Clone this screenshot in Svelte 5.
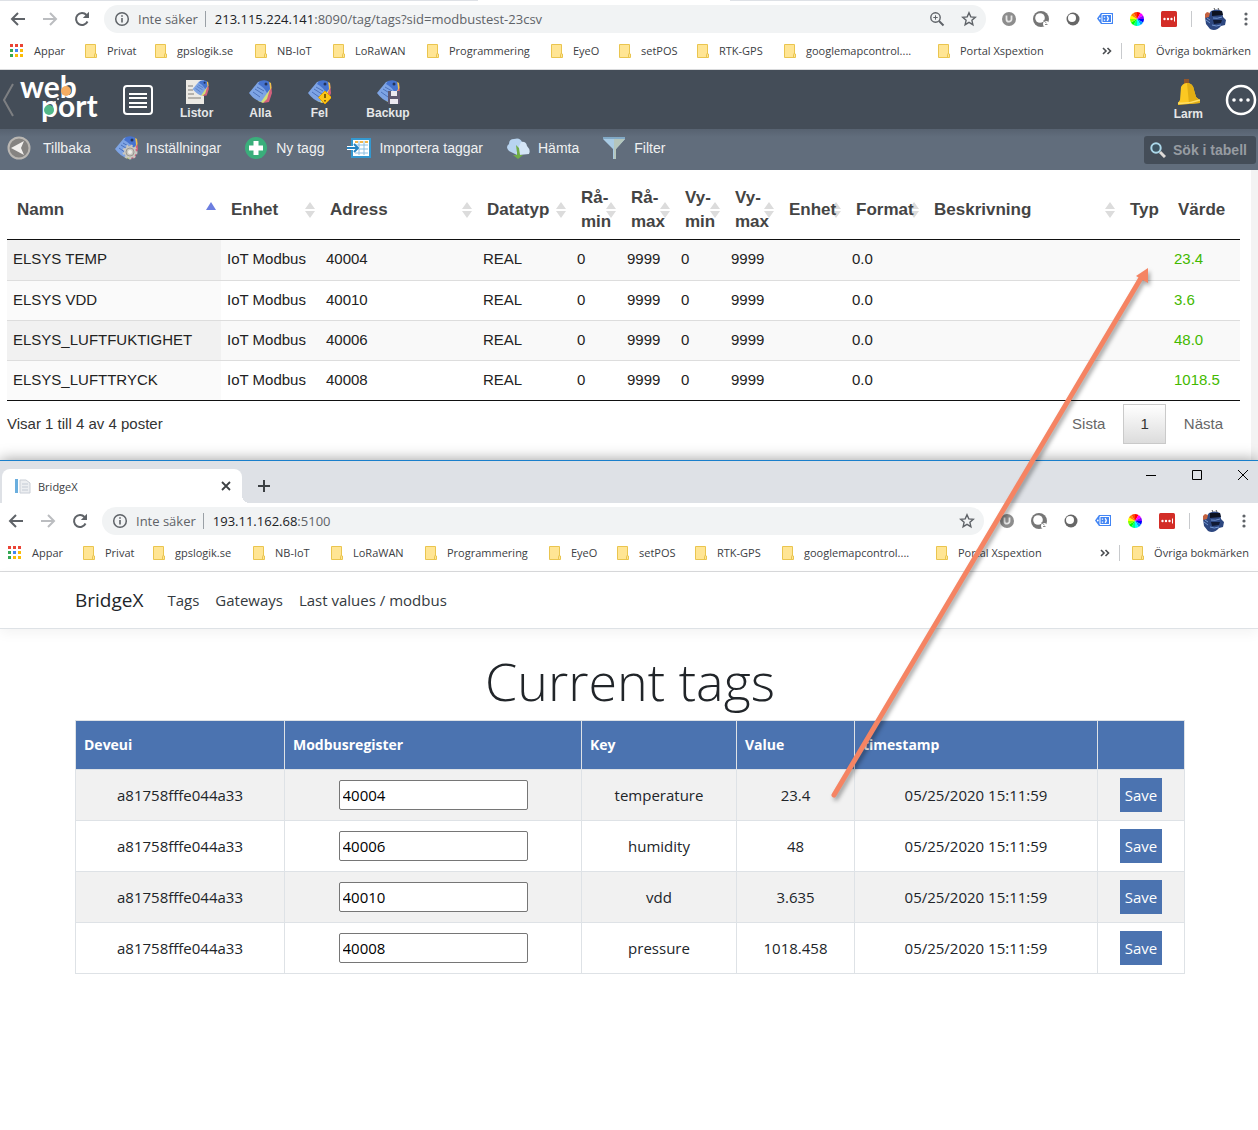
<script>
  const bookmarks = [
    'Privat',
    'gpslogik.se',
    'NB-IoT',
    'LoRaWAN',
    'Programmering',
    'EyeO',
    'setPOS',
    'RTK-GPS',
    'googlemapcontrol....',
    'Portal Xspextion',
  ];

  const appColors = ['#ea4335', '#ea4335', '#ea4335', '#34a853', '#4285f4', '#fbbc05', '#34a853', '#fbbc05', '#fbbc05'];
  const wheelColors = ['#f00', '#f0f', '#80f', '#00f', '#09f', '#0ff', '#0f8', '#0f0', '#8f0', '#ff0', '#f80', '#f40'];

  const columns = [
    { label: 'Namn', width: 'w-name', sort: 'asc' },
    { label: 'Enhet', width: 'w-unit', sort: 'both' },
    { label: 'Adress', width: 'w-address', sort: 'both' },
    { label: 'Datatyp', width: 'w-type', sort: 'both' },
    { label: 'Rå-min', width: 'w-min', sort: 'both' },
    { label: 'Rå-max', width: 'w-max', sort: 'both' },
    { label: 'Vy-min', width: 'w-min', sort: 'both' },
    { label: 'Vy-max', width: 'w-max', sort: 'both' },
    { label: 'Enhet', width: 'w-suffix', sort: 'both' },
    { label: 'Format', width: 'w-format', sort: 'both' },
    { label: 'Beskrivning', width: 'w-auto', sort: 'both' },
    { label: 'Typ', width: 'w-kind', sort: '' },
    { label: 'Värde', width: 'w-value', sort: '' },
  ];

  const posts = [
    { name: 'ELSYS TEMP', address: '40004', value: '23.4' },
    { name: 'ELSYS VDD', address: '40010', value: '3.6' },
    { name: 'ELSYS_LUFTFUKTIGHET', address: '40006', value: '48.0' },
    { name: 'ELSYS_LUFTTRYCK', address: '40008', value: '1018.5' },
  ];

  let tags = $state([
    { deveui: 'a81758fffe044a33', register: '40004', key: 'temperature', value: '23.4', time: '05/25/2020 15:11:59' },
    { deveui: 'a81758fffe044a33', register: '40006', key: 'humidity', value: '48', time: '05/25/2020 15:11:59' },
    { deveui: 'a81758fffe044a33', register: '40010', key: 'vdd', value: '3.635', time: '05/25/2020 15:11:59' },
    { deveui: 'a81758fffe044a33', register: '40008', key: 'pressure', value: '1018.458', time: '05/25/2020 15:11:59' },
  ]);

  function slice(i) {
    const a = (i * Math.PI) / 6;
    const b = ((i + 1) * Math.PI) / 6;
    return `M8 8 L${8 + 7 * Math.sin(a)} ${8 - 7 * Math.cos(a)} A7 7 0 0 1 ${8 + 7 * Math.sin(b)} ${8 - 7 * Math.cos(b)} Z`;
  }
</script>

{#snippet folder()}
  <svg class="folder" viewBox="0 0 12 14" aria-hidden="true">
    <path d="M.5 .5h10v9.500h1v3.500H.5z" fill="#ffe594" stroke="#eac54f" />
    <path d="M9.500 13V10.500q0-1 1-1" fill="none" stroke="#eac54f" />
  </svg>
{/snippet}

{#snippet tagShapes()}
  <path d="M20 3l3 1 1 9-3 9-6 1z" fill="#d4617c" />
  <path d="M20 7l2 2-3 10-4 4-5-2z" fill="#d3e07a" />
  <path d="M21 2l2 1 .5 5-2 3z" fill="#f0c24b" />
  <path d="M10 2q6-2 11 0l1 7-9 13q-7-2-12-9z" fill="#7ea4e4" />
  <path d="M12 1q6-2 9 1l1 7-3 4q-3-6-9-9z" fill="#4673cf" />
  <circle cx="18" cy="4" r="1.500" fill="#26355c" />
  <path d="M5 12l7 5M7 9l8 5M9 7l7 4" stroke="#4d72bb" stroke-width="1" />
{/snippet}

{#snippet addressBar(host, rest, zoomed)}
  <div class="address-bar">
    <button class="tool" aria-label="Bakåt">
      <svg viewBox="0 0 16 16"><path d="M15 8H2M8 2L2 8l6 6" fill="none" stroke="#5f6368" stroke-width="2" /></svg>
    </button>
    <button class="tool" aria-label="Framåt">
      <svg viewBox="0 0 16 16"><path d="M1 8h13M8 2l6 6-6 6" fill="none" stroke="#bbbdc0" stroke-width="2" /></svg>
    </button>
    <button class="tool" aria-label="Ladda om">
      <svg viewBox="0 0 16 16">
        <path d="M13.500 10.500A6 6 0 1 1 12.500 4" fill="none" stroke="#5f6368" stroke-width="2" />
        <path d="M15 .8V7H8.800z" fill="#5f6368" />
      </svg>
    </button>
    <div class="omnibox">
      <svg class="info" viewBox="0 0 16 16" aria-hidden="true">
        <circle cx="8" cy="8" r="6.300" fill="none" stroke="#5f6368" stroke-width="1.500" />
        <path d="M8 7v4.500M8 4.200v1.600" stroke="#5f6368" stroke-width="1.600" />
      </svg>
      <span class="insecure">Inte säker</span>
      <span class="url"><b>{host}</b>{rest}</span>
      {#if zoomed}
        <svg class="ico" viewBox="0 0 16 16" aria-hidden="true">
          <circle cx="6.500" cy="6.500" r="4.700" fill="none" stroke="#5f6368" stroke-width="1.400" />
          <path d="M10 10l4.500 4.500" stroke="#5f6368" stroke-width="2" />
          <path d="M4.300 6.500h4.400M6.500 4.300v4.400" stroke="#5f6368" />
        </svg>
      {/if}
      <svg class="ico" viewBox="0 0 16 16" aria-hidden="true">
        <path d="M8 1.800l1.800 4.100 4.500.4-3.400 3 1 4.400L8 11.400l-3.900 2.300 1-4.400-3.400-3 4.500-.4z" fill="none" stroke="#5f6368" stroke-width="1.400" />
      </svg>
    </div>
    <div class="extensions">
      <svg class="ico" viewBox="0 0 16 16" aria-hidden="true">
        <circle cx="8" cy="8" r="7" fill="#8d8d8d" />
        <path d="M5.500 4.500v3.700a2.500 2.500 0 0 0 5 0V4.500" fill="none" stroke="#e6e6e6" stroke-width="1.800" />
      </svg>
      <svg class="ico" viewBox="0 0 16 16" aria-hidden="true">
        <circle cx="8" cy="8" r="8" fill="#767676" />
        <circle cx="7" cy="7" r="4.800" fill="#fff" />
        <circle cx="13" cy="13" r="3" fill="#fff" />
        <path d="M10.500 9.500l3 2.500M12 13.500h2.500" stroke="#8a8a8a" fill="none" />
      </svg>
      <svg class="ico" viewBox="0 0 16 16" aria-hidden="true">
        <circle cx="8" cy="8" r="6.500" fill="#666" />
        <circle cx="7" cy="7" r="4" fill="#fff" />
      </svg>
      <svg class="ico" viewBox="0 0 16 16" aria-hidden="true">
        <path d="M4 2h12v11H4L0 7.500z" fill="#4285f4" />
        <path d="M5 3.500h9.500v8H5z" fill="none" stroke="#fff" />
        <path d="M7.500 5.500v1.200M7.500 8.500v1.200M10 5.200q2.500 2.300 0 4.600" fill="none" stroke="#fff" stroke-width="1.400" />
        <circle cx="2.800" cy="7.500" r=".9" fill="#fff" />
      </svg>
      <svg class="ico" viewBox="0 0 16 16" aria-hidden="true">
        {#each wheelColors as color, i}
          <path d={slice(i)} fill={color} />
        {/each}
      </svg>
      <svg class="ico" viewBox="0 0 16 16" aria-hidden="true">
        <rect width="16" height="16" rx="1.500" fill="#d32d27" />
        <path d="M13.500 5.500v5" stroke="#fff" />
        <circle cx="3.500" cy="8" r="1.200" fill="#fff" />
        <circle cx="7" cy="8" r="1.200" fill="#fff" />
        <circle cx="10.500" cy="8" r="1.200" fill="#fff" />
      </svg>
      <span class="rule"></span>
      <svg class="avatar" viewBox="0 0 22 22" aria-hidden="true">
        <path d="M7 3q6-3 11 0l1 6 3 3-1 5-4 1q-5 6-11 3l-4-5L1 9l4-3z" fill="#2d4780" />
        <path d="M1 6l2-2 3 1-1 4-4 1z" fill="#c5623f" />
        <path d="M8 3h10l1 4-11 1z" fill="#0d1220" />
        <path d="M9 12h9l-1 3-7 1z" fill="#111a33" />
        <path d="M9 10q4 1 9-1M8 17q4 2 9 0M2 12l4 3M3 10l3 2" stroke="#7396d0" fill="none" />
        <path d="M10 0l1 2M14 0l1 2" stroke="#555" />
      </svg>
      <button class="tool" aria-label="Meny">
        <svg viewBox="0 0 16 16" fill="#5f6368">
          <circle cx="8" cy="3" r="1.600" /><circle cx="8" cy="8" r="1.600" /><circle cx="8" cy="13" r="1.600" />
        </svg>
      </button>
    </div>
  </div>
{/snippet}

{#snippet bookmarkBar()}
  <nav class="bookmarks" aria-label="Bokmärken">
    <a class="bookmark apps" href="#appar">
      <svg class="grid-icon" viewBox="0 0 14 14" aria-hidden="true">
        {#each appColors as color, i}
          <rect x={(i % 3) * 5} y={Math.floor(i / 3) * 5} width="3" height="3" fill={color} />
        {/each}
      </svg>
      Appar
    </a>
    {#each bookmarks as name}
      <a class="bookmark" href="#{name}">{@render folder()}{name}</a>
    {/each}
    <div class="overflow">
      <button class="more" aria-label="Fler bokmärken">
        <svg viewBox="0 0 10 8"><path d="M1 1l3 3-3 3M5.500 1l3 3-3 3" fill="none" stroke="#4a4d51" stroke-width="1.600" /></svg>
      </button>
      <span class="rule"></span>
      <a class="bookmark" href="#ovriga">{@render folder()}Övriga bokmärken</a>
    </div>
  </nav>
{/snippet}

<div class="desktop">
  <section class="window webport">
    <div class="tab-edge"></div>
    {@render addressBar('213.115.224.141', ':8090/tag/tags?sid=modbustest-23csv', true)}
    {@render bookmarkBar()}

    <header class="app-header">
      <svg class="collapse" viewBox="0 0 12 36" aria-hidden="true">
        <path d="M11 2L2 18l9 16" fill="none" stroke="#7d7f82" stroke-width="2" />
      </svg>
      <svg class="logo" viewBox="0 0 84 50" role="img" aria-label="web port">
        <text><tspan x="1" y="23">web</tspan><tspan x="22" y="42">port</tspan></text>
        <circle cx="47" cy="16" r="5" fill="#f6ad62" />
        <circle cx="30" cy="35" r="5" fill="#52b788" />
        <circle cx="36" cy="27" r="1" fill="#fff" />
        <circle cx="39" cy="24" r="1" fill="#fff" />
      </svg>
      <button class="menu" aria-label="Meny">
        <svg viewBox="0 0 30 30" fill="none" stroke="#fff">
          <rect x="1" y="1" width="28" height="28" rx="3" stroke-width="2" />
          <path d="M6 9h18M6 13h18M6 18h18M6 22h18" stroke-width="2" />
        </svg>
      </button>
      <nav class="views">
        <a href="#listor">
          <svg viewBox="0 0 24 24" aria-hidden="true">
            <path d="M1 0h18v24H1z" fill="#ece9e4" />
            <path d="M3 6h5M3 10h5M3 14h6M3 18h13" stroke="#a3a09b" stroke-width="1.500" />
            <g transform="translate(7 0) scale(.7)">{@render tagShapes()}</g>
          </svg>
          Listor
        </a>
        <a href="#alla">
          <svg viewBox="0 0 24 24" aria-hidden="true">{@render tagShapes()}</svg>
          Alla
        </a>
        <a href="#fel">
          <svg viewBox="0 0 24 24" aria-hidden="true">
            {@render tagShapes()}
            <path d="M18 11l6.500 6.500L18 24l-6.500-6.500z" fill="#fcc419" stroke="#e2a400" />
            <path d="M18 14v4M18 20v1.500" stroke="#5c4300" stroke-width="1.500" />
          </svg>
          Fel
        </a>
        <a href="#backup">
          <svg viewBox="0 0 24 24" aria-hidden="true">
            {@render tagShapes()}
            <path d="M12 11h12v13H12z" fill="#5e5870" />
            <path d="M15 11h6v5h-6zM14 19h8v5h-8z" fill="#ece9f0" />
          </svg>
          Backup
        </a>
      </nav>
      <a class="alarm" href="#larm">
        <svg viewBox="0 0 24 28" aria-hidden="true">
          <path d="M8 0h5v5H8z" fill="#935629" />
          <path d="M5 8q2-4 6-4 6 0 7 7l2 7 5 4-1 2-22 2 0-2 2-3z" fill="#fcc822" />
          <path d="M11 4q6 0 7 7l2 7 5 4-1 2-11 1z" fill="#e2ae14" />
          <path d="M2 24q11 1 22-3" fill="none" stroke="#ffdf66" stroke-width="1.500" />
        </svg>
        Larm
      </a>
      <button class="options" aria-label="Fler val">
        <svg viewBox="0 0 32 32">
          <circle cx="16" cy="16" r="14" fill="none" stroke="#fff" stroke-width="2.500" />
          <circle cx="9" cy="16" r="1.800" fill="#fff" /><circle cx="16" cy="16" r="1.800" fill="#fff" /><circle cx="23" cy="16" r="1.800" fill="#fff" />
        </svg>
      </button>
    </header>

    <div class="app-toolbar">
      <button class="back">
        <svg viewBox="0 0 24 24" aria-hidden="true">
          <circle cx="12" cy="12" r="10.500" fill="#858381" stroke="#bab7b3" stroke-width="2" />
          <path d="M4 12l13-7-3 7 3 7z" fill="#f1efed" />
        </svg>
        Tillbaka
      </button>
      <button>
        <svg viewBox="0 0 24 24" aria-hidden="true">
          {@render tagShapes()}
          <circle cx="16" cy="16" r="6" fill="#c9c7c1" stroke="#c9c7c1" stroke-width="3" stroke-dasharray="2 2" />
          <circle cx="16" cy="16" r="4" fill="none" stroke="#9b9992" />
          <circle cx="16" cy="16" r="2" fill="#eeece6" />
        </svg>
        Inställningar
      </button>
      <button>
        <svg viewBox="0 0 24 24" aria-hidden="true">
          <circle cx="12" cy="12" r="11" fill="#3aae7b" />
          <path d="M12 5v14M5 12h14" stroke="#fff" stroke-width="5" />
        </svg>
        Ny tagg
      </button>
      <button>
        <svg viewBox="0 0 24 24" aria-hidden="true">
          <path d="M5 3h18v18H5z" fill="#fff" stroke="#3498cf" stroke-width="2" />
          <path d="M8 9h13M8 13h13M8 17h13M12 5v14M17 5v14" stroke="#8cbfe2" />
          <path d="M8 5h3v2H8zM13 5h3v2h-3zM18 5h3v2h-3z" fill="#f3b64b" />
          <path d="M0 10h6V6l7 6-7 6v-4H0z" fill="#fff" />
          <path d="M0 12h10M7 8l4 4-4 4" fill="none" stroke="#2483c2" stroke-width="2" />
        </svg>
        Importera taggar
      </button>
      <button>
        <svg viewBox="0 0 24 24" aria-hidden="true">
          <path d="M3 15q-4-4 0-7 0-5 5-5 6-2 8 3l1 7-6 6z" fill="#b8d4f0" />
          <path d="M10 17l5-11q5-1 6 4 4 4 2 8l-10 1z" fill="#d4e5f6" />
          <path d="M10 9l1 8v2H7l5 4 5-4h-3l-1-7z" fill="#70ad47" />
        </svg>
        Hämta
      </button>
      <button>
        <svg viewBox="0 0 24 24" aria-hidden="true">
          <path d="M1 1h22v2l-9 10v10h-3V13L1 3z" fill="#a9cbe4" />
          <path d="M12 3h11l-9 10v10h-2z" fill="#b5c6bc" />
          <path d="M1 1h22v2H1z" fill="#81a9c6" />
        </svg>
        Filter
      </button>
      <label class="search">
        <svg viewBox="0 0 16 16" aria-hidden="true">
          <circle cx="6" cy="6" r="4.700" fill="#3d5462" stroke="#acd8ea" stroke-width="2" />
          <path d="M10 10l5 5" stroke="#dedad7" stroke-width="3" />
        </svg>
        <input type="text" placeholder="Sök i tabell" aria-label="Sök i tabell" />
      </label>
    </div>

    <div class="list">
      <div class="list-body">
        <table class="posts">
          <thead>
            <tr>
              {#each columns as col}
                <th class={col.width} scope="col">
                  {col.label}
                  {#if col.sort === 'asc'}
                    <svg class="sorter" viewBox="0 0 10 16" aria-hidden="true"><path d="M5 0l5 8H0z" fill="#6c7ee0" /></svg>
                  {:else if col.sort}
                    <svg class="sorter" viewBox="0 0 10 16" aria-hidden="true"><path d="M5 0l5 7H0zM5 16l5-7H0z" fill="#dcdcdc" /></svg>
                  {/if}
                </th>
              {/each}
            </tr>
          </thead>
          <tbody>
            {#each posts as post}
              <tr>
                <td>{post.name}</td>
                <td>IoT Modbus</td>
                <td>{post.address}</td>
                <td>REAL</td>
                <td>0</td>
                <td>9999</td>
                <td>0</td>
                <td>9999</td>
                <td></td>
                <td>0.0</td>
                <td></td>
                <td></td>
                <td class="live">{post.value}</td>
              </tr>
            {/each}
          </tbody>
        </table>
        <div class="list-footer">
          <span>Visar 1 till 4 av 4 poster</span>
          <div class="pager">
            <button>Sista</button>
            <button class="current">1</button>
            <button>Nästa</button>
          </div>
        </div>
      </div>
      <div class="scrollbar"></div>
    </div>
  </section>

  <section class="window bridgex">
    <div class="tab-strip">
      <div class="tab">
        <svg viewBox="0 0 16 16" aria-hidden="true">
          <path d="M0 1h3v14H0z" fill="#6aaede" />
          <path d="M5 2h6l4 3v10H5z" fill="#eceef1" stroke="#c9ced6" />
          <path d="M7 6h6M7 9h6M7 12h6" stroke="#c3cad4" />
        </svg>
        <span>BridgeX</span>
        <button aria-label="Stäng flik">
          <svg viewBox="0 0 10 10"><path d="M1 1l8 8M9 1L1 9" stroke="#3c4043" stroke-width="1.800" /></svg>
        </button>
      </div>
      <button class="new-tab" aria-label="Ny flik">
        <svg viewBox="0 0 12 12"><path d="M6 0v12M0 6h12" stroke="#3c4043" stroke-width="2" /></svg>
      </button>
      <div class="controls">
        <button aria-label="Minimera"><svg viewBox="0 0 12 12"><path d="M1 6.500h10" stroke="#000" /></svg></button>
        <button aria-label="Maximera"><svg viewBox="0 0 12 12"><path d="M1.500 1.500h9v9h-9z" fill="none" stroke="#000" /></svg></button>
        <button aria-label="Stäng"><svg viewBox="0 0 12 12"><path d="M1 1l10 10M11 1L1 11" stroke="#000" /></svg></button>
      </div>
    </div>
    {@render addressBar('193.11.162.68', ':5100', false)}
    {@render bookmarkBar()}

    <nav class="site-nav">
      <a class="brand" href="#home">BridgeX</a>
      <a href="#tags">Tags</a>
      <a href="#gateways">Gateways</a>
      <a href="#last-values">Last values / modbus</a>
    </nav>

    <main>
      <h1>Current tags</h1>
      <table class="tags">
        <thead>
          <tr>
            <th class="c-deveui" scope="col">Deveui</th>
            <th class="c-register" scope="col">Modbusregister</th>
            <th class="c-key" scope="col">Key</th>
            <th class="c-value" scope="col">Value</th>
            <th class="c-time" scope="col">timestamp</th>
            <th class="c-save"></th>
          </tr>
        </thead>
        <tbody>
          {#each tags as tag}
            <tr>
              <td>{tag.deveui}</td>
              <td><input type="text" bind:value={tag.register} aria-label="Modbusregister {tag.key}" /></td>
              <td>{tag.key}</td>
              <td>{tag.value}</td>
              <td>{tag.time}</td>
              <td><button>Save</button></td>
            </tr>
          {/each}
        </tbody>
      </table>
    </main>
  </section>

  <!-- Connects the bridge value with the value shown in the tag list -->
  <svg class="arrow" viewBox="0 0 330 550" aria-hidden="true">
    <path d="M14 535L321 18" stroke="#f58463" stroke-width="5" stroke-linecap="round" />
    <path d="M328 8l0 15-12-7z" fill="#f58463" />
  </svg>
</div>

<style>
  :global(body) {
    margin: 0;
    background: #fff;
  }

  .desktop {
    position: relative;
    font-family: 'Open Sans', 'Noto Sans', sans-serif;
  }

  a {
    color: inherit;
    text-decoration: none;
  }

  button {
    margin: 0;
    padding: 0;
    border: 0;
    background: none;
    font: inherit;
    color: inherit;
    cursor: pointer;
  }

  svg {
    display: block;
    flex: none;
  }

  /* Browser chrome */
  .tab-edge {
    height: 1px;
    background: linear-gradient(90deg, #dee1e6 38%, #fff 38% 58%, #dee1e6 58%);
  }

  .address-bar {
    display: flex;
    align-items: center;
    height: 36px;
    padding: 0 4px 0 10px;
    gap: 16px;
    background: #fff;
  }

  .tool,
  .tool svg,
  .ico {
    width: 16px;
    height: 16px;
  }

  .tool {
    flex: none;
  }

  .omnibox {
    display: flex;
    align-items: center;
    flex: 1;
    min-width: 0;
    height: 28px;
    margin: 0 -1px 0 -2px;
    padding: 0 9px 0 10px;
    border-radius: 14px;
    background: #f1f3f4;
    box-sizing: border-box;
    font-size: 13px;
    line-height: 16px;
    color: #5f6368;
  }

  .omnibox .ico + .ico {
    margin-left: 16px;
  }

  .info {
    width: 16px;
    height: 16px;
    margin-right: 8px;
  }

  .insecure {
    flex: none;
    padding-right: 7px;
    border-right: 1px solid #9aa0a6;
  }

  .url {
    flex: 1;
    min-width: 0;
    padding-left: 9px;
    white-space: nowrap;
    overflow: hidden;
  }

  .url b {
    font-weight: 400;
    color: #202124;
  }

  .extensions {
    display: flex;
    align-items: center;
    gap: 16px;
  }

  .extensions .rule {
    margin: 0 -4px 0 -2px;
  }

  .extensions .tool {
    margin-left: -4px;
  }

  .rule {
    flex: none;
    width: 1px;
    height: 16px;
    background: #c8cacd;
  }

  .avatar {
    width: 22px;
    height: 22px;
  }

  .bookmarks {
    display: grid;
    grid-template-columns: 75px 70px 100px 78px 94px 124px 68px 78px 87px 154px 130px 1fr;
    align-items: center;
    height: 28px;
    padding: 0 7px 4px 10px;
    border-bottom: 1px solid #d9dadc;
    background: #fff;
    font-size: 11px;
    line-height: 16px;
    color: #3c4043;
    white-space: nowrap;
  }

  .bookmark {
    display: flex;
    align-items: center;
    gap: 10px;
  }

  .folder {
    width: 12px;
    height: 14px;
  }

  .grid-icon {
    width: 14px;
    height: 14px;
  }

  .overflow {
    display: flex;
    align-items: center;
    justify-content: flex-end;
  }

  .overflow .rule {
    margin: 0 12px 0 9px;
  }

  .more svg {
    width: 10px;
    height: 8px;
  }

  /* Web Port */
  .webport {
    font-family: 'Liberation Sans', Arial, sans-serif;
  }

  .webport .address-bar,
  .webport .bookmarks {
    font-family: 'Open Sans', 'Noto Sans', sans-serif;
  }

  .app-header {
    display: flex;
    align-items: center;
    height: 59px;
    padding: 0 1px 0 2px;
    background: #444d58;
    font-size: 12px;
    font-weight: 700;
    line-height: 14px;
    color: #e6e7e8;
  }

  .collapse {
    width: 12px;
    height: 36px;
  }

  .logo {
    width: 84px;
    height: 50px;
    margin: 0 20px 0 5px;
    overflow: visible;
  }

  .logo text {
    font-family: Lato, sans-serif;
    font-size: 30px;
    font-weight: 700;
    fill: #fff;
  }

  .menu svg {
    width: 30px;
    height: 30px;
  }

  .views {
    display: flex;
    gap: 35px;
    margin-left: 27px;
  }

  .views a,
  .alarm {
    display: flex;
    flex-direction: column;
    align-items: center;
    gap: 2px;
  }

  .views svg {
    width: 24px;
    height: 24px;
  }

  .alarm {
    margin-left: auto;
    gap: 0;
  }

  .alarm svg {
    width: 24px;
    height: 28px;
  }

  .options {
    margin-left: 22px;
  }

  .options svg {
    width: 32px;
    height: 32px;
  }

  .app-toolbar {
    display: flex;
    align-items: center;
    height: 41px;
    padding: 0 2px 0 7px;
    gap: 23px;
    background: linear-gradient(#576270, #616d7c 8px);
    font-size: 14px;
    line-height: 16px;
    color: #f0f1f2;
    text-shadow: 0 0 1px #f0f1f2;
  }

  .app-toolbar button {
    display: flex;
    align-items: center;
    gap: 8px;
    margin-top: -3px;
  }

  .app-toolbar .back {
    gap: 12px;
  }

  .app-toolbar button svg {
    width: 24px;
    height: 24px;
  }

  .search {
    display: flex;
    align-items: center;
    gap: 7px;
    width: 112px;
    height: 28px;
    margin-left: auto;
    padding: 0 4px 0 6px;
    border-radius: 3px;
    box-sizing: border-box;
    background: #444d58;
  }

  .search svg {
    width: 16px;
    height: 16px;
  }

  .search input {
    width: 100%;
    min-width: 0;
    padding: 0;
    border: 0;
    background: none;
    font: 700 14px 'Liberation Sans', Arial, sans-serif;
    color: #fff;
  }

  .search input::placeholder {
    color: #979ca2;
    opacity: 1;
    text-shadow: none;
  }

  .list {
    display: flex;
    background: #fff;
  }

  .list-body {
    flex: 1;
    padding: 11px 11px 16px 7px;
  }

  .scrollbar {
    width: 7px;
    background: #f3f3f3;
  }

  .posts {
    width: 100%;
    table-layout: fixed;
    border-collapse: separate;
    border-spacing: 0;
    border-bottom: 1px solid #111;
    font-size: 15px;
    line-height: 24px;
    color: #222;
  }

  .posts th {
    position: relative;
    z-index: 0;
    padding: 5px 0 5px 10px;
    border-bottom: 1px solid #111;
    font-size: 17px;
    text-align: left;
    color: #444;
  }

  .w-name { width: 204px; }
  .w-unit { width: 89px; }
  .w-address { width: 147px; }
  .w-type { width: 84px; }
  .w-min { width: 40px; }
  .w-max { width: 44px; }
  .w-suffix { width: 57px; }
  .w-format { width: 68px; }
  .w-kind { width: 38px; }
  .w-value { width: 62px; }

  .sorter {
    position: absolute;
    z-index: -1;
    top: 50%;
    right: 5px;
    width: 10px;
    height: 16px;
    margin-top: -8px;
  }

  .posts td {
    height: 37px;
    padding: 0 6px 2px;
    border-top: 1px solid #ddd;
    white-space: nowrap;
  }

  .posts tbody tr:first-child td {
    height: 38px;
    border-top: 0;
  }

  .posts tbody tr:nth-child(odd) {
    background: #f9f9f9;
  }

  .posts td:first-child {
    background: #fafafa;
  }

  .posts tr:nth-child(odd) td:first-child {
    background: #f1f1f1;
  }

  .posts .live {
    color: #43b900;
  }

  .list-footer {
    display: flex;
    justify-content: space-between;
    align-items: center;
    padding-top: 3px;
    font-size: 15px;
    line-height: 38px;
    color: #333;
  }

  .pager {
    display: flex;
    gap: 1px;
    color: #666;
  }

  .pager button {
    padding: 1px 17px;
  }

  .pager .current {
    padding: 0 16px;
    border: 1px solid #cacaca;
    background: linear-gradient(#fff, #dcdcdc);
    color: #333;
  }

  /* BridgeX */
  .bridgex {
    position: relative;
    border-top: 1px solid #1a7fcb;
    background: #fff;
    box-shadow: 0 0 14px rgba(0, 0, 0, 0.4);
    min-height: 669px;
  }

  .bridgex .address-bar {
    padding: 0 6px 0 8px;
  }

  .bridgex .bookmarks {
    padding: 0 9px 4px 8px;
  }

  .tab-strip {
    display: flex;
    height: 42px;
    padding-left: 2px;
    background: #dee1e6;
  }

  .tab {
    position: relative;
    display: flex;
    align-items: center;
    width: 240px;
    height: 34px;
    margin-top: 8px;
    padding: 0 11px 0 13px;
    border-radius: 8px 8px 0 0;
    box-sizing: border-box;
    background: #fff;
    font-size: 11px;
    color: #3c4043;
  }

  .tab::after {
    content: '';
    position: absolute;
    left: 100%;
    bottom: 0;
    width: 8px;
    height: 8px;
    background: radial-gradient(circle at 100% 0, #dee1e6 8px, #fff 8px);
  }

  .tab > svg {
    width: 16px;
    height: 16px;
    margin-right: 7px;
  }

  .tab button {
    margin-left: auto;
  }

  .tab button svg {
    width: 10px;
    height: 10px;
  }

  .new-tab {
    margin: 8px 0 0 16px;
  }

  .new-tab svg {
    width: 12px;
    height: 12px;
  }

  .controls {
    display: flex;
    gap: 34px;
    height: 28px;
    margin-left: auto;
    padding-right: 9px;
  }

  .controls svg {
    width: 12px;
    height: 12px;
  }

  .site-nav {
    display: flex;
    align-items: center;
    gap: 16px;
    height: 56px;
    padding: 0 75px;
    border-bottom: 1px solid #dee2e6;
    box-shadow: 0 4px 12px rgba(0, 0, 0, 0.05);
    font-size: 15px;
    color: #343a40;
  }

  .site-nav .brand {
    margin-right: 8px;
    font-size: 19px;
    color: #212529;
  }

  main {
    padding: 18px 73px 0 75px;
  }

  h1 {
    margin: 0 0 6px;
    font-size: 52px;
    font-weight: 300;
    line-height: 67px;
    text-align: center;
    color: #212529;
  }

  .tags {
    width: 100%;
    table-layout: fixed;
    border-collapse: collapse;
    font-size: 15px;
    line-height: 24px;
    color: #212529;
  }

  .tags th,
  .tags td {
    padding: 0 8px;
    border: 1px solid #dee2e6;
    text-align: center;
  }

  .tags th {
    height: 48px;
    background: #4b73b0;
    font-size: 14px;
    text-align: left;
    color: #fff;
  }

  .tags td {
    height: 50px;
  }

  .tags tbody tr:nth-child(odd) {
    background: #f1f1f1;
  }

  .c-deveui { width: 192px; }
  .c-register { width: 280px; }
  .c-key { width: 138px; }
  .c-value { width: 101px; }
  .c-save { width: 70px; }

  .tags input {
    display: block;
    width: 189px;
    height: 30px;
    margin: 0 auto;
    padding: 0 3px;
    border: 1px solid #767676;
    border-radius: 2px;
    box-sizing: border-box;
    font: inherit;
    color: #000;
  }

  .tags button {
    height: 34px;
    padding: 0 5px;
    background: #4b73b0;
    color: #fff;
  }

  .arrow {
    position: absolute;
    top: 260px;
    left: 820px;
    width: 330px;
    height: 550px;
    pointer-events: none;
    filter: drop-shadow(2px 3px 2px rgba(0, 0, 0, 0.35));
  }
</style>
